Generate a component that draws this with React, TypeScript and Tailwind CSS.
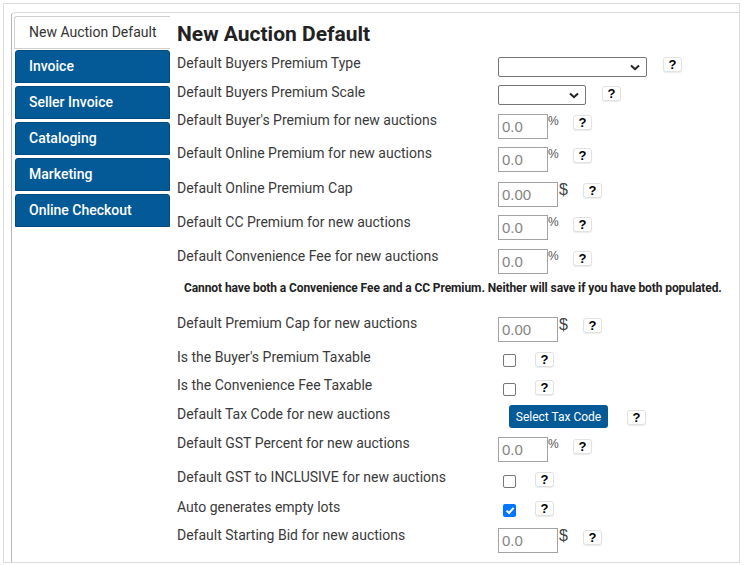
import React from "react"

type Kind = "select" | "pct" | "usd" | "check" | "button" | "warning"

type Row = {
    label: string
    kind: Kind
    h: string
    pt?: string
    helpMt?: string
    cbMt?: string
    selW?: string
    checked?: boolean
}

const tabs = ["Invoice", "Seller Invoice", "Cataloging", "Marketing", "Online Checkout"]

const rows: Row[] = [
    { label: "Default Buyers Premium Type", kind: "select", h: "h-[29px]", pt: "pt-[4px]", helpMt: "mt-0", selW: "w-[149px]" },
    { label: "Default Buyers Premium Scale", kind: "select", h: "h-[28px]", pt: "pt-[3px]", helpMt: "mt-[1px]", selW: "w-[88px]" },
    { label: "Default Buyer's Premium for new auctions", kind: "pct", h: "h-[33px]", pt: "pt-[4px]", helpMt: "mt-[1px]" },
    { label: "Default Online Premium for new auctions", kind: "pct", h: "h-[35px]", pt: "pt-[4px]", helpMt: "mt-[1px]" },
    { label: "Default Online Premium Cap", kind: "usd", h: "h-[34px]", pt: "pt-[4px]", helpMt: "mt-[1px]" },
    { label: "Default CC Premium for new auctions", kind: "pct", h: "h-[34px]", pt: "pt-[3px]", helpMt: "mt-[2px]" },
    { label: "Default Convenience Fee for new auctions", kind: "pct", h: "h-[34px]", pt: "pt-[3px]", helpMt: "mt-[2px]" },
    { label: "Cannot have both a Convenience Fee and a CC Premium. Neither will save if you have both populated.", kind: "warning", h: "h-[33px]" },
    { label: "Default Premium Cap for new auctions", kind: "usd", h: "h-[34px]", pt: "pt-[4px]", helpMt: "mt-[1px]" },
    { label: "Is the Buyer's Premium Taxable", kind: "check", h: "h-[28px]", pt: "pt-[5px]", cbMt: "mt-[2px]" },
    { label: "Is the Convenience Fee Taxable", kind: "check", h: "h-[29px]", pt: "pt-[5px]", cbMt: "mt-[3px]" },
    { label: "Default Tax Code for new auctions", kind: "button", h: "h-[29px]", pt: "pt-[1px]", helpMt: "mt-[5px]" },
    { label: "Default GST Percent for new auctions", kind: "pct", h: "h-[34px]", pt: "pt-[4px]", helpMt: "mt-[2px]" },
    { label: "Default GST to INCLUSIVE for new auctions", kind: "check", h: "h-[30px]", pt: "pt-[5px]", cbMt: "mt-[3px]" },
    { label: "Auto generates empty lots", kind: "check", h: "h-[28px]", pt: "pt-[4px]", cbMt: "mt-[3px]", checked: true },
    { label: "Default Starting Bid for new auctions", kind: "usd", h: "h-[34px]", pt: "pt-[3px]", helpMt: "mt-[2px]" },
]

function Help({ className = "" }: { className?: string }) {
    return (
        <div className={"w-[19px] h-[15px] flex items-center justify-center bg-white border border-[#e2e2e2] rounded-[3px] shadow-[0_1px_1px_rgba(0,0,0,0.08)] text-[13px] font-bold text-black font-['Liberation_Sans',Arial,sans-serif] leading-none " + className}>
            ?
        </div>
    )
}

function Field({ value, wide }: { value: string, wide?: boolean }) {
    return (
        <div className={(wide ? "w-[60px]" : "w-[50px]") + " h-[25px] border border-[#a3a3a3] flex items-center pl-[3px] pt-[1px] text-[15px] text-[#858585] font-['Liberation_Sans',Arial,sans-serif] bg-white"}>
            {value}
        </div>
    )
}

function Controls({ row, idx }: { row: Row, idx: number }) {
    if (row.kind === "select") {
        return (
            <div className={"flex items-start " + row.pt}>
                <div className={row.selW + " h-[20px] border border-[#767676] rounded-[2px] flex items-center justify-end pr-[6px] bg-white"}>
                    <svg width="10" height="7" viewBox="0 0 10 7">
                        <polyline points="1,1.5 5,5.2 9,1.5" fill="none" stroke="#222" strokeWidth="2" />
                    </svg>
                </div>
                <Help className={"ml-[16px] " + row.helpMt} />
            </div>
        )
    }
    if (row.kind === "pct" || row.kind === "usd") {
        const usd = row.kind === "usd"
        const val = usd ? (idx === 15 ? "0.0" : "0.00") : "0.0"
        return (
            <div className={"flex items-start " + row.pt}>
                <Field value={val} wide={usd} />
                {usd
                    ? <span className="w-[8px] ml-[1px] text-[16px] leading-[16px] text-[#444] font-['Liberation_Sans',Arial,sans-serif]">$</span>
                    : <span className="w-[9px] text-[12px] leading-[14px] text-[#555] font-['Liberation_Sans',Arial,sans-serif]">%</span>}
                <Help className={"ml-[16px] " + row.helpMt} />
            </div>
        )
    }
    if (row.kind === "check") {
        return (
            <div className={"flex items-start " + row.pt}>
                {row.checked
                    ? <div className={"w-[13px] h-[13px] ml-[5px] rounded-[2px] bg-[#0075ff] flex items-center justify-center " + row.cbMt}>
                        <svg width="10" height="9" viewBox="0 0 10 9">
                            <polyline points="1.5,4.6 4,7 8.6,1.8" fill="none" stroke="white" strokeWidth="2" />
                        </svg>
                    </div>
                    : <div className={"w-[13px] h-[13px] ml-[5px] rounded-[2px] border border-[#767676] bg-white " + row.cbMt} />}
                <Help className="ml-[19px]" />
            </div>
        )
    }
    return (
        <div className={"flex items-start " + row.pt}>
            <button className="ml-[11px] w-[99px] h-[23px] rounded-[3px] bg-[#035a96] text-white text-[12px] font-normal font-['Roboto',sans-serif]">
                Select Tax Code
            </button>
            <Help className={"ml-[19px] " + row.helpMt} />
        </div>
    )
}

export default function App() {
    return (
        <div className="w-[745px] h-[565px] bg-white pl-[3px] pt-[3px] font-['Roboto',sans-serif]">
            <div className="w-[737px] h-[560px] border border-[#dcdcdc] pl-[7px] pt-[8px]">
                <div className="h-full border-t border-l border-t-[#dcdcdc] border-l-[#b5b5b5] rounded-tl-[4px] flex">
                    <div className="w-[158px] pl-[2px] pt-[3px] flex flex-col">
                        <div className="h-[33px] border border-r-0 border-[#cfcfcf] rounded-tl-[3px] bg-white flex items-center pl-[14px] text-[14px] text-[#333]">
                            New Auction Default
                        </div>
                        <div className="flex flex-col gap-[3px] pl-[1px] pt-[1px]">
                            {tabs.map(t => (
                                <div key={t} className="h-[33px] bg-[#035a96] rounded-t-[3px] border border-[#024a7c] flex items-center pl-[13px] text-[14px] font-medium text-white">
                                    {t}
                                </div>
                            ))}
                        </div>
                    </div>
                    <div className="flex-1 pl-[7px] pt-[9px]">
                        <h1 className="text-[21px] leading-[24px] font-bold text-[#222] mb-[7px]">New Auction Default</h1>
                        {rows.map((row, i) => (
                            row.kind === "warning"
                                ? <div key={i} className={row.h + " pl-[7px] text-[12px] leading-[16px] font-bold tracking-[-0.09px] text-[#222]"}>{row.label}</div>
                                : <div key={i} className={row.h + " flex items-start"}>
                                    <div className="w-[321px] text-[14px] leading-[20px] text-[#3a3a3a]">{row.label}</div>
                                    <Controls row={row} idx={i} />
                                </div>
                        ))}
                    </div>
                </div>
            </div>
        </div>
    )
}
